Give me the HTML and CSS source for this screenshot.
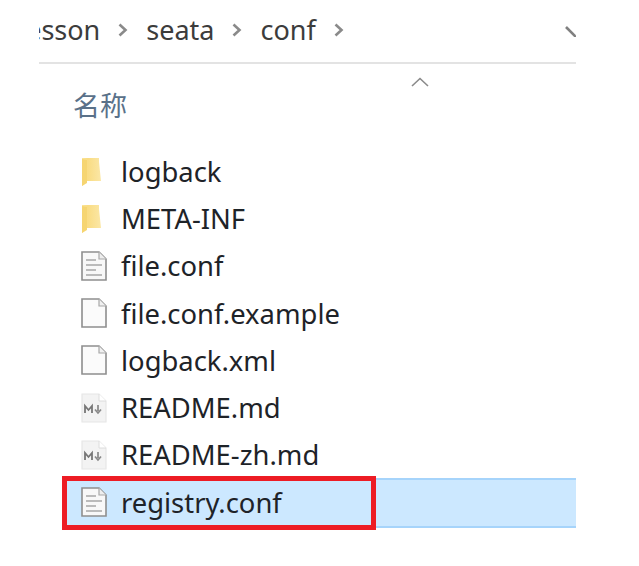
FILE: index.html
```html
<!DOCTYPE html>
<html lang="zh">
<head>
<meta charset="utf-8">
<title>conf</title>
<link rel="stylesheet" href="styles.css">
</head>
<body>
<svg class="defs" width="0" height="0" aria-hidden="true">
  <defs>
    <linearGradient id="fold" x1="0" x2="1" y1="0" y2="0">
      <stop offset="0" stop-color="#fbe49a"/>
      <stop offset="0.3" stop-color="#f9dc83"/>
      <stop offset="1" stop-color="#fbe7a6"/>
    </linearGradient>
    <symbol id="folder" viewBox="0 0 24 30">
      <path d="M1 1H18V5L20 24H6L1 29Z" fill="url(#fold)"/>
      <path d="M1 2V29L6 26V3Z" fill="#f6d571"/>
    </symbol>
    <symbol id="blank" viewBox="0 0 26 30">
      <path d="M1 1H18L25 8V29H1Z" fill="#fbfbfb" stroke="#8e8e8e" stroke-width="1.6"/>
      <path d="M18 1V8H25" fill="#f0f0f0" stroke="#a8a8a8" stroke-width="1.2"/>
    </symbol>
    <symbol id="text" viewBox="0 0 26 30">
      <path d="M1 1H18L25 8V29H1Z" fill="#f8f8f8" stroke="#8e8e8e" stroke-width="1.6"/>
      <path d="M18 1V8H25" fill="#eee" stroke="#a8a8a8" stroke-width="1.2"/>
      <path d="M5 9H15M5 14H21M5 19H15M5 24H21" stroke="#a6a6a6" stroke-width="1.6"/>
    </symbol>
    <symbol id="md" viewBox="0 0 26 30">
      <path d="M1 1H18L25 8V29H1Z" fill="#f3f3f3" stroke="#e6e6e6" stroke-width="1.2"/>
      <path d="M18 1V8H25" fill="#fff" stroke="#dcdcdc" stroke-width="1"/>
      <path d="M4 20V13L7.5 17L11 13V20" fill="none" stroke="#777" stroke-width="1.8"/>
      <path d="M17 12V18M14 16.500L17 20L20 16.500" fill="none" stroke="#888" stroke-width="1.7"/>
    </symbol>
  </defs>
</svg>
<main class="panel">
  <nav class="crumbs">
    <span class="crumb first">Lesson</span>
    <svg class="chev" viewBox="0 0 12 14"><path d="M2.500 1.500L8.500 7L2.500 12.500"/></svg>
    <span class="crumb">seata</span>
    <svg class="chev" viewBox="0 0 12 14"><path d="M2.500 1.500L8.500 7L2.500 12.500"/></svg>
    <span class="crumb">conf</span>
    <svg class="chev" viewBox="0 0 12 14"><path d="M2.500 1.500L8.500 7L2.500 12.500"/></svg>
    <svg class="drop" viewBox="0 0 12 14"><path d="M1 4L11 14"/></svg>
  </nav>
  <section class="listing">
    <header class="head">
      <span class="name-col">名称</span>
      <svg class="sort" viewBox="0 0 18 10"><path d="M1 9L9 1.500L17 9"/></svg>
    </header>
    <ul class="files">
      <li class="row"><svg class="ico ico-folder"><use href="#folder"/></svg><span>logback</span></li>
      <li class="row"><svg class="ico ico-folder"><use href="#folder"/></svg><span>META-INF</span></li>
      <li class="row"><svg class="ico"><use href="#text"/></svg><span>file.conf</span></li>
      <li class="row"><svg class="ico"><use href="#blank"/></svg><span>file.conf.example</span></li>
      <li class="row"><svg class="ico"><use href="#blank"/></svg><span>logback.xml</span></li>
      <li class="row"><svg class="ico"><use href="#md"/></svg><span>README.md</span></li>
      <li class="row"><svg class="ico"><use href="#md"/></svg><span>README-zh.md</span></li>
      <li class="row selected"><svg class="ico"><use href="#text"/></svg><span>registry.conf</span><div class="callout"></div></li>
    </ul>
  </section>
</main>
</body>
</html>
```

FILE: styles.css
```css
* { box-sizing: border-box; }
html, body { margin: 0; padding: 0; background: #fff; }
body {
  width: 639px;
  height: 566px;
  overflow: hidden;
  padding-left: 39px;
  font-family: "Noto Sans", "Noto Sans CJK SC", sans-serif;
  color: #1f1f1f;
}
.defs { position: absolute; }
.panel { width: 537px; }
.crumbs {
  height: 64px;
  border-bottom: 2px solid #e3e3e3;
  display: flex;
  align-items: center;
  overflow: hidden;
  white-space: nowrap;
  font-size: 27px;
  color: #3c3c3c;
  padding-bottom: 3px;
}
.crumb.first { margin-left: -27px; }
.chev {
  width: 12px;
  height: 14px;
  margin: 0 17px 0 17px;
  flex: none;
  fill: none;
  stroke: #8a8a8a;
  stroke-width: 2.6;
}
.drop {
  width: 12px;
  height: 14px;
  margin-left: 203px;
  flex: none;
  fill: none;
  stroke: #808080;
  stroke-width: 2.6;
}
.head {
  height: 84px;
  position: relative;
  padding: 22px 0 0 34px;
}
.name-col {
  font-family: "Noto Sans CJK SC", sans-serif;
  font-size: 27px;
  line-height: 38px;
  color: #5a7189;
  display: block;
}
.sort {
  position: absolute;
  left: 372px;
  top: 13px;
  width: 18px;
  height: 10px;
  fill: none;
  stroke: #8a8a8a;
  stroke-width: 1.6;
}
.files { list-style: none; margin: 0; padding: 0; }
.row {
  height: 47.2px;
  display: flex;
  align-items: center;
  padding-left: 42px;
  font-size: 27.4px;
  color: #1e2328;
  position: relative;
}
.ico { width: 26px; height: 30px; flex: none; margin-right: 14px; }
.ico-folder { width: 24px; margin-right: 16px; }
.selected {
  margin-left: 27px;
  padding-left: 15px;
  padding-bottom: 2px;
  height: 50px;
  background: #cce8ff;
  border-top: 2px solid #a6d4fb;
  border-bottom: 2px solid #a6d4fb;
}
.callout {
  position: absolute;
  left: -4px;
  top: -4px;
  width: 314px;
  height: 54px;
  border: 5px solid #ed1c24;
}
```
